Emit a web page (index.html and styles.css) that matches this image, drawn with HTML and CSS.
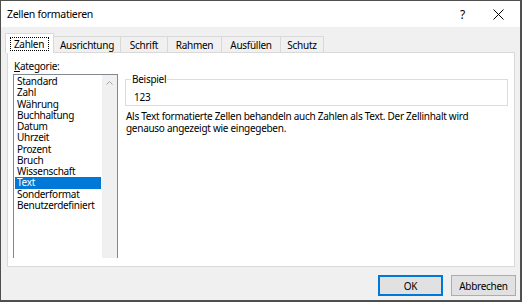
FILE: index.html
```html
<!DOCTYPE html>
<html lang="de">
<head>
    <meta charset="UTF-8">
    <title>Zellen formatieren</title>
    <link rel="stylesheet" href="styles.css">
</head>
<body>
    <div class="window">
        <div class="titlebar">
            <span class="title">Zellen formatieren</span>
            <span class="help">?</span>
            <span class="close">
                <svg width="11" height="11" viewBox="0 0 11 11"><path d="M0.5 0.5 L10.5 10.5 M10.5 0.5 L0.5 10.5" stroke="#000" stroke-width="1" fill="none"/></svg>
            </span>
        </div>

        <div class="tabs">
            <div class="tab tab-zahlen selected"><span class="focus">Zahlen</span></div>
            <div class="tab tab-ausrichtung">Ausrichtung</div>
            <div class="tab tab-schrift">Schrift</div>
            <div class="tab tab-rahmen">Rahmen</div>
            <div class="tab tab-ausfuellen">Ausfüllen</div>
            <div class="tab tab-schutz">Schutz</div>
        </div>

        <div class="panel">
            <div class="left-col">
                <div class="label"><u>K</u>ategorie:</div>
                <div class="listbox">
                    <ul class="items">
                        <li>Standard</li>
                        <li>Zahl</li>
                        <li>Währung</li>
                        <li>Buchhaltung</li>
                        <li>Datum</li>
                        <li>Uhrzeit</li>
                        <li>Prozent</li>
                        <li>Bruch</li>
                        <li>Wissenschaft</li>
                        <li class="active">Text</li>
                        <li>Sonderformat</li>
                        <li>Benutzerdefiniert</li>
                    </ul>
                    <div class="scrollbar">
                        <div class="arrow-up">
                            <svg width="7" height="4" viewBox="0 0 7 4"><path d="M0.5 3.5 L3.5 0.5 L6.5 3.5" stroke="#a3a3a3" stroke-width="1" fill="none"/></svg>
                        </div>
                    </div>
                </div>
            </div>

            <div class="right-col">
                <fieldset class="sample">
                    <legend>Beispiel</legend>
                    <div class="sample-value">123</div>
                </fieldset>
                <p class="desc">Als Text formatierte Zellen behandeln auch Zahlen als Text. Der Zellinhalt wird genauso angezeigt wie eingegeben.</p>
            </div>
        </div>

        <div class="footer">
            <button type="button" class="btn btn-default">OK</button>
            <button type="button" class="btn">Abbrechen</button>
        </div>
    </div>
</body>
</html>
```

FILE: styles.css
```css
* {
    box-sizing: border-box;
}
body {
    margin: 0;
    background: #fff;
}
.window {
    width: 522px;
    height: 302px;
    border: 1px solid #4f4f4f;
    border-right-width: 2px;
    border-bottom-width: 2px;
    background: #f0f0f0;
    display: flex;
    flex-direction: column;
    font-family: "Noto Sans", sans-serif;
    font-size: 10px;
    letter-spacing: -0.28px;
    color: #000;
}

/* title bar */
.titlebar {
    height: 26px;
    flex: none;
    background: #fff;
    display: flex;
    align-items: center;
    padding-left: 6px;
}
.title {
    font-size: 10.5px;
    letter-spacing: -0.3px;
    flex: 1;
}
.help {
    font-size: 12px;
    width: 33px;
}
.close {
    display: flex;
    width: 27px;
}

/* tabs */
.tabs {
    height: 26px;
    flex: none;
    display: flex;
    align-items: flex-end;
    padding-left: 4px;
    margin-bottom: -1px;
    position: relative;
    z-index: 1;
}
.tab {
    height: 16px;
    margin-bottom: 1px;
    border-top: 1px solid #d9d9d9;
    border-right: 1px solid #d9d9d9;
    display: flex;
    align-items: center;
    justify-content: center;
}
.tab.selected {
    height: 20px;
    margin-bottom: 0;
    background: #fff;
    border-left: 1px solid #d9d9d9;
    align-items: flex-start;
    padding-top: 3px;
}
.focus {
    border: 1px dotted #000;
    padding: 0 4px 0 3px;
    line-height: 12px;
}
.tab-zahlen { width: 49px; }
.tab-ausrichtung { width: 67px; }
.tab-schrift { width: 47px; }
.tab-rahmen { width: 54px; }
.tab-ausfuellen { width: 59px; }
.tab-schutz { width: 43px; }

/* panel */
.panel {
    flex: 1;
    margin: 0 5px 0 6px;
    background: #fff;
    border: 1px solid #d9d9d9;
    display: flex;
}
.left-col {
    width: 110px;
    padding: 7px 0 8px 5px;
    display: flex;
    flex-direction: column;
}
.label {
    line-height: 12px;
    padding-left: 1px;
    margin-bottom: 2px;
}
.listbox {
    flex: 1;
    border: 1px solid #828790;
    border-bottom: none;
    display: flex;
}
.items {
    list-style: none;
    margin: 0;
    padding: 1px 1px 0 1px;
    flex: 1;
}
.items li {
    line-height: 11.25px;
    height: 11.25px;
    padding-left: 2px;
}
.items li.active {
    background: #0078d7;
    color: #fff;
}
.scrollbar {
    width: 15px;
    background: #f0f0f0;
}
.arrow-up {
    height: 16px;
    display: flex;
    align-items: center;
    justify-content: center;
}

.right-col {
    flex: 1;
    padding: 20px 6px 0 7px;
}
.sample {
    margin: 0;
    border: 1px solid #dcdcdc;
    padding: 6px 0 2px 8px;
}
.sample legend {
    padding: 0 1px;
    margin-left: -3px;
    line-height: 12px;
}
.sample-value {
    line-height: 12px;
}
.desc {
    margin: 4px 0 0 0;
    padding-left: 1px;
    max-width: 370px;
    line-height: 12px;
}

/* buttons */
.footer {
    height: 33px;
    flex: none;
    display: flex;
    justify-content: flex-end;
    align-items: flex-start;
    padding: 8px 4px 0 0;
    gap: 8px;
}
.btn {
    width: 65px;
    height: 21px;
    background: #e1e1e1;
    border: 1px solid #adadad;
    font-family: "Noto Sans", sans-serif;
    font-size: 10px;
    letter-spacing: -0.28px;
    color: #000;
    padding: 0;
}
.btn-default {
    border: 2px solid #0078d7;
}
```
